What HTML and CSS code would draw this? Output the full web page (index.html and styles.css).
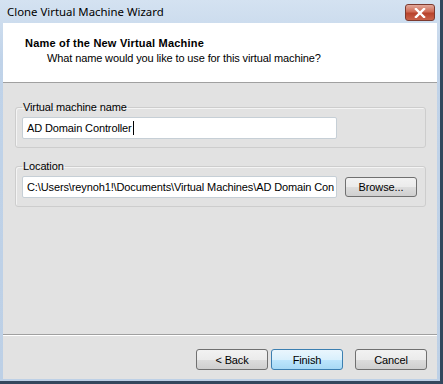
FILE: index.html
```html
<!DOCTYPE html>
<html>
<head>
    <title>Clone Virtual Machine Wizard</title>
    <link rel="stylesheet" href="styles.css">
</head>
<body>
    <div class="window">
        <div class="titlebar">
            <span class="title">Clone Virtual Machine Wizard</span>
            <button class="close" title="Close">
                <svg width="12" height="10" viewBox="0 0 12 10">
                    <path d="M2 1 L10 9 M10 1 L2 9" stroke="#fff" stroke-width="2.4" stroke-linecap="square"/>
                </svg>
            </button>
        </div>

        <div class="client">
            <!-- Cabeçalho branco do assistente -->
            <div class="header">
                <h1>Name of the New Virtual Machine</h1>
                <p>What name would you like to use for this virtual machine?</p>
            </div>

            <div class="content">
                <fieldset class="group">
                    <legend>Virtual machine name</legend>
                    <div class="field">AD Domain Controller<span class="caret"></span></div>
                </fieldset>

                <fieldset class="group">
                    <legend>Location</legend>
                    <div class="row">
                        <div class="field">C:\Users\reynoh1!\Documents\Virtual Machines\AD Domain Con</div>
                        <button class="btn browse">Browse...</button>
                    </div>
                </fieldset>
            </div>

            <div class="footer">
                <button class="btn">&lt; Back</button>
                <button class="btn primary">Finish</button>
                <button class="btn cancel">Cancel</button>
            </div>
        </div>
    </div>
</body>
</html>
```

FILE: styles.css
```css
/* Página */
body {
    margin: 0;
    font-family: "Liberation Sans", Arial, sans-serif;
    font-size: 11px;
    letter-spacing: -0.12px;
    color: #000;
    background: #2f4358;
}

/* Moldura da janela */
.window {
    width: 434px;
    height: 379px;
    padding: 0 3px 2px 3px;
    border-right: 3px solid #33475d;
    border-bottom: 3px solid #33475d;
    background: linear-gradient(to bottom, #d4e2f1, #c0d3e9 60px, #bdd0e6);
    display: flex;
    flex-direction: column;
}

.titlebar {
    height: 23px;
    display: flex;
    align-items: flex-start;
    justify-content: space-between;
}

.title {
    margin: 5px 0 0 4px;
    font-family: "Noto Sans", sans-serif;
    font-size: 11.4px;
    letter-spacing: 0;
    line-height: 14px;
}

.close {
    width: 30px;
    height: 17px;
    margin: 4px 2px 0 0;
    padding: 0;
    border: 1px solid #7c3a2f;
    border-radius: 3px;
    background: linear-gradient(to bottom, #e2a99c, #cf6b55 45%, #b8432c 55%, #c9624a);
    display: flex;
    align-items: center;
    justify-content: center;
}

/* Área cliente */
.client {
    flex: 1;
    display: flex;
    flex-direction: column;
    background: #e2e2e2;
}

.header {
    height: 60px;
    box-sizing: border-box;
    background: #fff;
    border-bottom: 1px solid #a0a0a0;
    padding: 13px 0 0 22px;
}

.header h1 {
    margin: 0;
    font-size: 11px;
    font-weight: bold;
    letter-spacing: 0.2px;
    line-height: 14px;
}

.header p {
    margin: 1px 0 0 22px;
    line-height: 14px;
}

.content {
    flex: 1;
    padding: 17px 11px 0 12px;
    border-bottom: 1px solid #a0a0a0;
    box-shadow: 0 1px 0 #fff;
}

/* Caixas de grupo */
.group {
    margin: 0 0 11px 0;
    padding: 2px 8px 8px 6px;
    border: 1px solid #cdcdcd;
    border-radius: 3px;
    box-shadow: inset 1px 1px 0 #f4f4f4;
}

.group legend {
    padding: 0 1px;
    line-height: 15px;
}

.field {
    width: 309px;
    height: 20px;
    padding: 0 0 0 4px;
    border: 1px solid #c6cfd6;
    border-radius: 2px;
    background: #fff;
    line-height: 20px;
    white-space: nowrap;
    overflow: hidden;
}

.caret {
    display: inline-block;
    width: 1px;
    height: 14px;
    margin-left: 1px;
    background: #000;
    vertical-align: -3px;
}

.row {
    display: flex;
    align-items: center;
    justify-content: space-between;
}

/* Botões */
.btn {
    width: 72px;
    height: 21px;
    padding: 0;
    font-family: inherit;
    font-size: 11px;
    letter-spacing: inherit;
    color: #000;
    border: 1px solid #707070;
    border-radius: 3px;
    background: linear-gradient(to bottom, #f2f2f2, #ebebeb 50%, #dddddd 51%, #cfcfcf);
}

.browse {
    width: 72px;
    height: 20px;
}

.primary {
    border-color: #3c7fb1;
    background: linear-gradient(to bottom, #eaf6fd, #d9f0fc 50%, #bee6fd 51%, #a7d9f5);
}

.footer {
    height: 44px;
    display: flex;
    align-items: flex-start;
    justify-content: flex-end;
    padding: 14px 10px 0 0;
    box-sizing: border-box;
    gap: 3px;
}

.footer .cancel {
    margin-left: 9px;
}
```
